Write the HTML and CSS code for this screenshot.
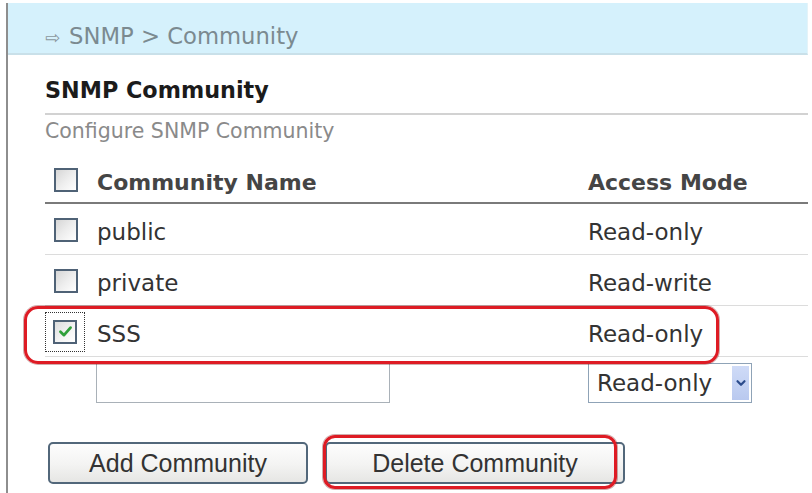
FILE: index.html
```html
<!DOCTYPE html>
<html lang="en">
<head>
<meta charset="utf-8">
<title>SNMP Community</title>
<link rel="stylesheet" href="styles.css">
</head>
<body>
<div class="frame">
  <div class="crumb"><span class="crumb-arrow">&#8680;</span><span class="crumb-text">SNMP &gt; Community</span></div>
  <div class="content">
    <h1 class="title">SNMP Community</h1>
    <p class="subtitle">Configure SNMP Community</p>
    <div class="table">
      <div class="row head">
        <span class="cell-check"><span class="cb"></span></span>
        <span class="cell">Community Name</span>
        <span class="cell">Access Mode</span>
      </div>
      <div class="row">
        <span class="cell-check"><span class="cb"></span></span>
        <span class="cell">public</span>
        <span class="cell">Read-only</span>
      </div>
      <div class="row">
        <span class="cell-check"><span class="cb"></span></span>
        <span class="cell">private</span>
        <span class="cell">Read-write</span>
      </div>
      <div class="row row-marked">
        <span class="cell-check"><span class="focus"><span class="cb cb-on"><svg viewBox="0 0 14 14" width="15" height="15"><path d="M2.3 7.2 L5.6 10.4 L11.7 3.4" fill="none" stroke="#2fa03a" stroke-width="2.6" stroke-linecap="round" stroke-linejoin="round"/></svg></span></span></span>
        <span class="cell">SSS</span>
        <span class="cell">Read-only</span>
        <span class="mark mark-row"></span>
      </div>
      <div class="row-new">
        <span></span>
        <input class="text-in" type="text" aria-label="Community name">
        <div class="select"><span class="select-val">Read-only</span><span class="select-btn"><svg viewBox="0 0 12 12" width="12" height="12"><path d="M2.5 4.2 L6 7.8 L9.5 4.2" fill="none" stroke="#2c4c8c" stroke-width="2.2" stroke-linecap="round" stroke-linejoin="round"/></svg></span></div>
      </div>
    </div>
    <div class="buttons">
      <button class="btn btn-add" type="button">Add Community</button>
      <span class="btn-wrap">
        <button class="btn btn-del" type="button">Delete Community</button>
        <span class="mark mark-btn"></span>
      </span>
    </div>
  </div>
</div>
</body>
</html>
```

FILE: styles.css
```css
* { box-sizing: border-box; }

html, body {
  margin: 0;
  padding: 0;
  background: #ffffff;
}

body {
  width: 812px;
  height: 493px;
  overflow: hidden;
  font-family: "DejaVu Sans", Verdana, sans-serif;
  color: #333;
}

.frame {
  margin: 3px 0 0 6px;
  width: 802px;
  height: 490px;
  border-left: 2px solid #8e8e8e;
}

.crumb {
  height: 52px;
  background: #d5f1fc;
  border-bottom: 2px solid #c9e0e9;
  border-right: 1px solid #e4f3f8;
  padding: 20px 0 0 37px;
  display: flex;
  align-items: baseline;
  color: #7b8a90;
  font-size: 22.7px;
  line-height: 26px;
}

.crumb-arrow {
  font-size: 18px;
  margin-right: 9px;
  color: #8a979c;
}

.content {
  padding: 0 0 0 37px;
}

.title {
  margin: 22px 0 0 0;
  padding-bottom: 10px;
  border-bottom: 2px solid #d2d2d2;
  font-size: 22.3px;
  line-height: 26px;
  font-weight: bold;
  color: #1b1b1b;
}

.subtitle {
  margin: 4px 0 0 0;
  font-size: 20.5px;
  line-height: 24px;
  color: #8a8a8a;
}

.table {
  margin-top: 17px;
}

.row,
.row-new {
  display: grid;
  grid-template-columns: 52px 491px 1fr;
  align-items: center;
}

.row {
  position: relative;
  height: 51px;
  padding-top: 5px;
  border-bottom: 1px solid #dcdcdc;
  font-size: 23px;
  color: #333;
}

.row .cell-check {
  margin-top: -4px;
}

.row.head {
  height: 44px;
  padding-top: 2px;
  border-bottom: 2px solid #7a7a7a;
  font-size: 22px;
  font-weight: bold;
  color: #454545;
}

.cell-check {
  display: flex;
  align-items: center;
  padding-left: 9px;
}

.cb {
  width: 24px;
  height: 24px;
  border: 2px solid #4f6276;
  background: linear-gradient(135deg, #d6d6d6 0%, #ededed 50%, #ffffff 100%);
  display: flex;
  align-items: center;
  justify-content: center;
}

.cb-on {
  background: linear-gradient(135deg, #dcdcdc 0%, #f3f3f3 55%, #ffffff 100%);
}

.focus {
  display: flex;
  padding: 7px;
  margin-left: -9px;
  border: 1px dotted #333;
}

.mark {
  position: absolute;
  border: 3px solid #de1b24;
  box-shadow: 0 0 0 1px rgba(120, 20, 20, 0.35);
  pointer-events: none;
}

.mark-row {
  left: -21px;
  top: 0;
  width: 695px;
  height: 58px;
  border-radius: 14px;
}

.row-new {
  margin-top: 6px;
  height: 40px;
}

.text-in {
  width: 294px;
  height: 40px;
  margin-left: -1px;
  border: 1px solid #a9b1b8;
  background: #fff;
  font: inherit;
}

.select {
  width: 164px;
  height: 40px;
  display: flex;
  align-items: center;
  justify-content: space-between;
  border: 1px solid #8fa3b7;
  padding: 2px 2px 2px 8px;
  font-size: 23px;
  color: #333;
}

.select-btn {
  width: 17px;
  height: 34px;
  background: linear-gradient(180deg, #cfdbf7, #b9c9ef);
  display: flex;
  align-items: center;
  justify-content: center;
}

.buttons {
  display: flex;
  align-items: center;
  gap: 17px;
  margin-top: 39px;
  padding-left: 3px;
}

.btn {
  height: 42px;
  border: 2px solid #52677a;
  border-radius: 5px;
  background: linear-gradient(180deg, #fdfdfd 0%, #f3f3f2 55%, #e6e6e4 100%);
  font-family: "Liberation Sans", Arial, sans-serif;
  font-size: 25px;
  color: #333;
  padding: 0;
}

.btn-add {
  width: 260px;
}

.btn-wrap {
  position: relative;
  display: flex;
}

.btn-del {
  width: 300px;
}

.mark-btn {
  left: -2px;
  top: -7px;
  width: 294px;
  height: 54px;
  border-radius: 12px;
}
```
